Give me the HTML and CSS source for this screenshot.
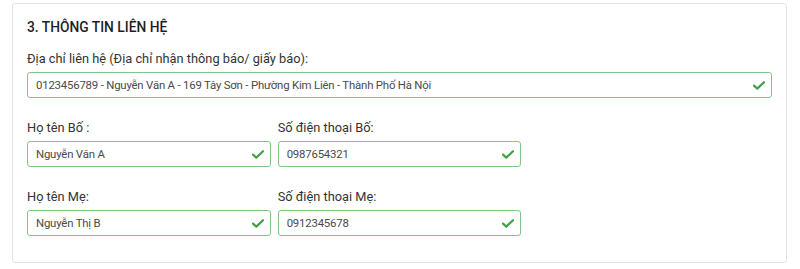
FILE: index.html
```html
<!DOCTYPE html>
<html lang="vi">
<head>
<meta charset="utf-8">
<link rel="stylesheet" href="styles.css">
</head>
<body>
<section class="card">
  <h3 class="card-title">3. THÔNG TIN LIÊN HỆ</h3>
  <div class="form-grid">
    <div class="field span-3">
      <label class="label">Địa chỉ liên hệ (Địa chỉ nhận thông báo/ giấy báo):</label>
      <div class="input">
        <span class="value">0123456789 - Nguyễn Văn A - 169 Tây Sơn - Phường Kim Liên - Thành Phố Hà Nội</span>
        <svg class="check" viewBox="0 0 12 9" width="12" height="9"><path d="M1 4.6 L4.3 7.6 L11 1.2" fill="none" stroke="#43a047" stroke-width="2.2" stroke-linecap="round" stroke-linejoin="round"/></svg>
      </div>
    </div>
    <div class="field">
      <label class="label">Họ tên Bố :</label>
      <div class="input">
        <span class="value">Nguyễn Văn A</span>
        <svg class="check" viewBox="0 0 12 9" width="12" height="9"><path d="M1 4.6 L4.3 7.6 L11 1.2" fill="none" stroke="#43a047" stroke-width="2.2" stroke-linecap="round" stroke-linejoin="round"/></svg>
      </div>
    </div>
    <div class="field">
      <label class="label">Số điện thoại Bố:</label>
      <div class="input">
        <span class="value">0987654321</span>
        <svg class="check" viewBox="0 0 12 9" width="12" height="9"><path d="M1 4.6 L4.3 7.6 L11 1.2" fill="none" stroke="#43a047" stroke-width="2.2" stroke-linecap="round" stroke-linejoin="round"/></svg>
      </div>
    </div>
    <div class="field empty"></div>
    <div class="field">
      <label class="label">Họ tên Mẹ:</label>
      <div class="input">
        <span class="value">Nguyễn Thị B</span>
        <svg class="check" viewBox="0 0 12 9" width="12" height="9"><path d="M1 4.6 L4.3 7.6 L11 1.2" fill="none" stroke="#43a047" stroke-width="2.2" stroke-linecap="round" stroke-linejoin="round"/></svg>
      </div>
    </div>
    <div class="field">
      <label class="label">Số điện thoại Mẹ:</label>
      <div class="input">
        <span class="value">0912345678</span>
        <svg class="check" viewBox="0 0 12 9" width="12" height="9"><path d="M1 4.6 L4.3 7.6 L11 1.2" fill="none" stroke="#43a047" stroke-width="2.2" stroke-linecap="round" stroke-linejoin="round"/></svg>
      </div>
    </div>
  </div>
</section>
</body>
</html>
```
FILE: styles.css
```css
* { box-sizing: border-box; }
html, body { margin: 0; padding: 0; background: #ffffff; }
body {
  font-family: Roboto, "Noto Sans", sans-serif;
  color: #222;
  padding: 3px 13px 6px 12px;
}
.card {
  border: 1px solid #e3e3e3;
  border-radius: 3px;
  padding: 13px 14px 26px 14px;
  background: #fff;
}
.card-title {
  margin: 0 0 13px 0;
  font-size: 13.8px;
  font-weight: 500;
  line-height: 20px;
  color: #1f1f1f;
}
.form-grid {
  display: grid;
  grid-template-columns: repeat(3, 1fr);
  column-gap: 7px;
  row-gap: 21px;
}
.span-3 { grid-column: span 3; }
.label {
  display: block;
  font-size: 12.8px;
  line-height: 18px;
  color: #333;
  margin-bottom: 4px;
}
.input {
  display: flex;
  align-items: center;
  height: 26px;
  border: 1px solid #80c783;
  border-radius: 3px;
  padding: 0 6px 0 8px;
}
.value {
  flex: 1;
  font-size: 11.4px;
  letter-spacing: -0.2px;
  color: #4a4a4a;
  white-space: nowrap;
}
.check { flex: none; }
```
